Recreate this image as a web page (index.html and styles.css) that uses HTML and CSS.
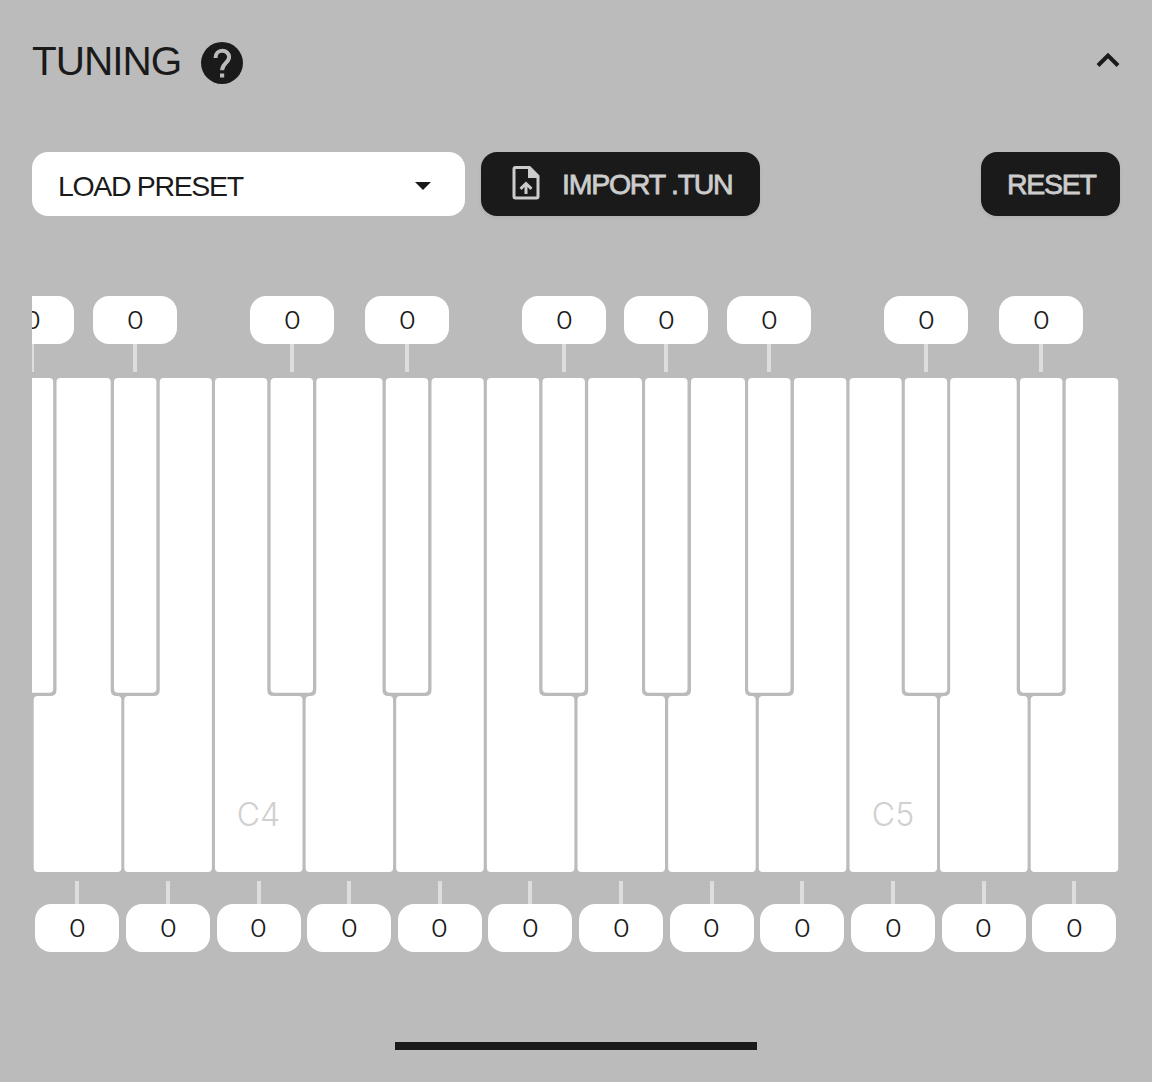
FILE: index.html
```html
<!DOCTYPE html>
<html lang="en">
<head>
<meta charset="utf-8">
<title>Tuning</title>
<link rel="stylesheet" href="styles.css">
</head>
<body>
<main class="panel">
  <header class="header">
    <h1 class="title">TUNING</h1>
    <svg class="help" viewBox="0 0 42 42"><circle cx="21" cy="21" r="21"/><path class="help-hook" d="M14.500 16c0-4.500 3-7.300 6.700-7.300s6.900 2.800 6.900 6.300c0 5.500-7 6.500-7 13.300"/><path class="help-dot" d="M19 31.500h4.200v4H19z"/></svg>
    <svg class="chevron" viewBox="0 0 24 16"><path d="M2 13.500 12 3.500l10 10"/></svg>
  </header>
  <div class="toolbar">
    <div class="select"><span>LOAD PRESET</span><svg class="caret" viewBox="0 0 16 8"><path d="M0 0h16L8 8z"/></svg></div>
    <button class="button import"><svg class="file" viewBox="0 0 28 34"><path class="file-line" d="M3.500 1.500h14L26 10v20.500q0 1.500-1.500 1.500h-21Q2 32 2 30.500V3q0-1.500 1.500-1.500z"/><path class="file-fill" d="M16 1h2l9 9v2H16zM14 15.500l6.500 6.300-2.100 2.100-2.900-2.800V28h-3v-6.900l-2.900 2.800-2.100-2.100z"/></svg><span>IMPORT .TUN</span></button>
    <button class="button reset"><span>RESET</span></button>
  </div>
  <div class="upper">
    <div class="note first"><span>0</span></div><div class="note"><span>0</span></div><div class="note wide"><span>0</span></div><div class="note medium"><span>0</span></div><div class="note wide"><span>0</span></div><div class="note near"><span>0</span></div><div class="note"><span>0</span></div><div class="note wide"><span>0</span></div><div class="note medium"><span>0</span></div>
  </div>
  <svg class="keyboard" viewBox="32 378 1088 494">
    <g class="keys">
      <path d="M56.500 382q0-4 4-4H106.700q4 0 4 4V690q0 6 6 6H117.300q4 0 4 4V868q0 4-4 4H37.700q-4 0-4-4V700q0-4 4-4H50.500q6 0 6-6z"/>
      <path d="M159.700 382q0-4 4-4H207.900q4 0 4 4V868q0 4-4 4H128.300q-4 0-4-4V700q0-4 4-4H153.700q6 0 6-6z"/>
      <path d="M215 382q0-4 4-4H263.300q4 0 4 4V690q0 6 6 6H298.500q4 0 4 4V868q0 4-4 4H219q-4 0-4-4z"/>
      <path d="M316.300 382q0-4 4-4H378.500q4 0 4 4V690q0 6 6 6H389.100q4 0 4 4V868q0 4-4 4H309.600q-4 0-4-4V700q0-4 4-4H310.300q6 0 6-6z"/>
      <path d="M431.500 382q0-4 4-4H479.700q4 0 4 4V868q0 4-4 4H400.200q-4 0-4-4V700q0-4 4-4H425.500q6 0 6-6z"/>
      <path d="M486.900 382q0-4 4-4H535.200q4 0 4 4V690q0 6 6 6H570.400q4 0 4 4V868q0 4-4 4H490.900q-4 0-4-4z"/>
      <path d="M588.200 382q0-4 4-4H638q4 0 4 4V690q0 6 6 6H661q4 0 4 4V868q0 4-4 4H581.500q-4 0-4-4V700q0-4 4-4H582.200q6 0 6-6z"/>
      <path d="M691 382q0-4 4-4H741q4 0 4 4V690q0 6 6 6H751.700q4 0 4 4V868q0 4-4 4H672.200q-4 0-4-4V700q0-4 4-4H685q6 0 6-6z"/>
      <path d="M793.900 382q0-4 4-4H842.300q4 0 4 4V868q0 4-4 4H762.800q-4 0-4-4V700q0-4 4-4H787.900q6 0 6-6z"/>
      <path d="M849.500 382q0-4 4-4H897.700q4 0 4 4V690q0 6 6 6H933q4 0 4 4V868q0 4-4 4H853.500q-4 0-4-4z"/>
      <path d="M950.200 382q0-4 4-4H1012.700q4 0 4 4V690q0 6 6 6H1023.600q4 0 4 4V868q0 4-4 4H944q-4 0-4-4V700q0-4 4-4H944.200q6 0 6-6z"/>
      <path d="M1065.700 382q0-4 4-4H1114.200q4 0 4 4V868q0 4-4 4H1034.700q-4 0-4-4V700q0-4 4-4H1059.700q6 0 6-6z"/>
    </g>
    <defs><path id="sharp" d="M-21.200 382q0-4 4-4h34.400q4 0 4 4V688.700q0 4-4 4h-34.400q-4 0-4-4z"/></defs>
    <g class="keys">
      <use href="#sharp" x="32"/><use href="#sharp" x="135.200"/><use href="#sharp" x="291.800"/><use href="#sharp" x="407"/><use href="#sharp" x="563.700"/><use href="#sharp" x="666.300"/><use href="#sharp" x="769.300"/><use href="#sharp" x="926"/><use href="#sharp" x="1041.200"/>
    </g>
    <text class="octave" x="258.500" y="825.500">C4</text>
    <text class="octave" x="893" y="825.500">C5</text>
  </svg>
  <div class="lower">
    <div class="note"><span>0</span></div><div class="note"><span>0</span></div><div class="note"><span>0</span></div><div class="note"><span>0</span></div><div class="note"><span>0</span></div><div class="note"><span>0</span></div><div class="note"><span>0</span></div><div class="note"><span>0</span></div><div class="note"><span>0</span></div><div class="note"><span>0</span></div><div class="note"><span>0</span></div><div class="note"><span>0</span></div>
  </div>
  <div class="scrollbar"></div>
</main>
</body>
</html>
```
FILE: styles.css
```css
* { box-sizing: border-box; }
body {
  margin: 0;
  background: #bbb;
  color: #1a1a1a;
  font-family: "Liberation Sans", Arial, sans-serif;
}
.panel {
  display: flex;
  flex-direction: column;
  height: 1082px;
  padding: 0 32px;
  overflow: hidden;
}
.header {
  display: flex;
  align-items: center;
  height: 124px;
}
.title {
  width: 149px;
  margin: 0 0 2px;
  font-size: 40.500px;
  font-weight: 400;
  letter-spacing: -1px;
  white-space: nowrap;
}
.help { width: 42px; height: 42px; margin: 2px 0 0 20px; fill: #1a1a1a; }
.help-hook { fill: none; stroke: #bbb; stroke-width: 4; }
.help-dot { fill: #bbb; }
.chevron {
  width: 24px;
  height: 16px;
  margin: 0 0 5px auto;
  fill: none;
  stroke: #1a1a1a;
  stroke-width: 4;
}
.toolbar {
  display: flex;
  height: 64px;
  margin-top: 28px;
  gap: 16px;
  font-size: 28.500px;
  letter-spacing: -1.350px;
}
.select {
  display: flex;
  align-items: center;
  justify-content: space-between;
  width: 433px;
  padding: 4px 34px 0 26px;
  border-radius: 16px;
  background: #fff;
}
.caret { width: 16px; height: 8px; fill: #1a1a1a; }
.button {
  display: flex;
  align-items: center;
  padding: 0 26px;
  border: 0;
  border-radius: 16px;
  background: #1a1a1a;
  box-shadow: 0 2px 4px rgba(0, 0, 0, .06);
  color: #ccc;
  font: inherit;
  letter-spacing: -1.250px;
  white-space: nowrap;
  -webkit-text-stroke: 0.8px #ccc;
}
.button span { padding-top: 1px; }
.import { width: 279px; padding-left: 31px; gap: 22px; }
.reset { width: 139px; margin-left: auto; }
.file { flex: none; width: 28px; height: 34px; margin-bottom: 2px; }
.file-line { fill: none; stroke: #ccc; stroke-width: 3; }
.file-fill { fill: #ccc; }
.note {
  position: relative;
  flex: none;
  width: 84px;
  height: 48px;
  border-radius: 16px;
  background: #fff;
  font: 350 24px/50px Inter, sans-serif;
  text-align: center;
}
.note span { display: inline-block; transform: scaleX(1.16); }
.note::after {
  content: "";
  position: absolute;
  left: 40px;
  width: 4px;
  background: #ddd;
}
.upper {
  display: flex;
  height: 76px;
  margin-top: 80px;
  overflow: hidden;
}
.upper .note { margin-left: 19px; }
.upper .first { margin-left: -42px; }
.upper .wide { margin-left: 73px; }
.upper .medium { margin-left: 31px; }
.upper .near { margin-left: 18px; }
.upper .note::after { top: 48px; height: 28px; }
.keyboard { flex: none; width: 1088px; height: 494px; margin-top: 6px; }
.keys { fill: #fff; }
.octave {
  fill: #d0d0d0;
  font: 350 32px Inter, sans-serif;
  text-anchor: middle;
}
.lower {
  display: grid;
  grid-template-columns: repeat(12, 90.640px);
  justify-items: center;
  margin-top: 32px;
}
.lower .note::after { bottom: 48px; height: 23px; }
.scrollbar {
  width: 362px;
  height: 8px;
  margin: 90px auto 0;
  background: #1a1a1a;
}
```
